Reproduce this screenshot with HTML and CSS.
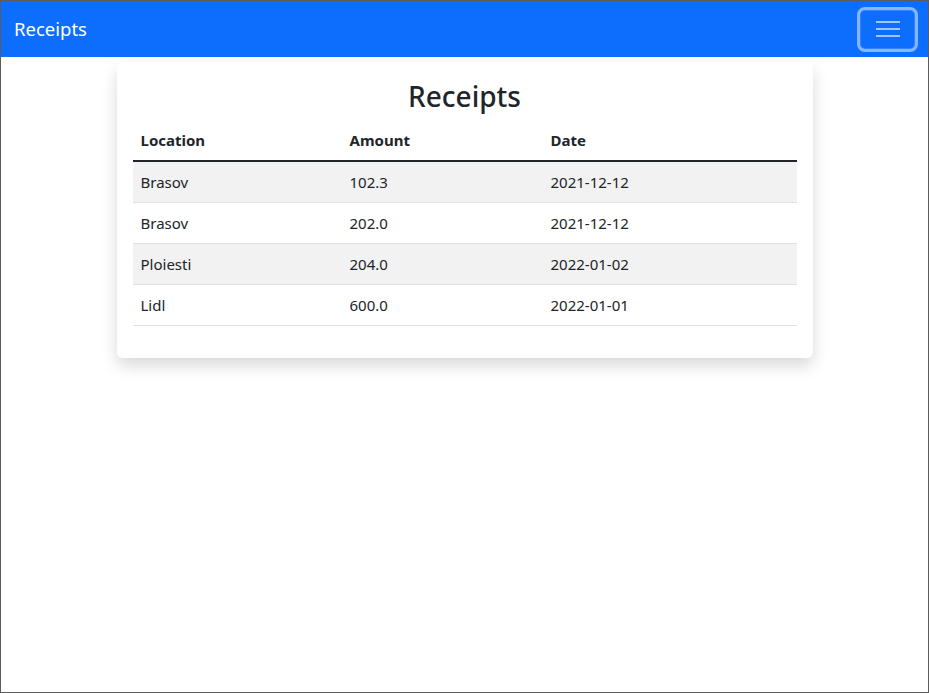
FILE: index.html
```html
<!DOCTYPE html>
<html lang="en">
<head>
<meta charset="utf-8">
<title>Receipts</title>
<link rel="stylesheet" href="styles.css">
</head>
<body>
<div class="window">
  <nav class="navbar">
    <span class="brand">Receipts</span>
    <button class="toggler" type="button" aria-label="Toggle navigation">
      <svg width="24" height="18" viewBox="0 0 24 18"><path d="M0 2h24M0 9h24M0 16h24" stroke="rgba(255,255,255,0.6)" stroke-width="2"/></svg>
    </button>
  </nav>
  <main class="container">
    <section class="card">
      <h2 class="title">Receipts</h2>
      <table class="table">
        <thead>
          <tr><th class="c1">Location</th><th class="c2">Amount</th><th class="c3">Date</th></tr>
        </thead>
        <tbody>
          <tr class="odd"><td>Brasov</td><td>102.3</td><td>2021-12-12</td></tr>
          <tr><td>Brasov</td><td>202.0</td><td>2021-12-12</td></tr>
          <tr class="odd"><td>Ploiesti</td><td>204.0</td><td>2022-01-02</td></tr>
          <tr><td>Lidl</td><td>600.0</td><td>2022-01-01</td></tr>
        </tbody>
      </table>
    </section>
  </main>
</div>
</body>
</html>
```
FILE: styles.css
```css
* { box-sizing: border-box; }
html, body { margin: 0; padding: 0; }
body {
  font-family: "Noto Sans", "Open Sans", sans-serif;
  color: #212529;
  background: #fff;
}
.window {
  height: 100vh;
  border: 1px solid #5c5c5c;
  display: flex;
  flex-direction: column;
}
.navbar {
  height: 56px;
  background: #0d6efd;
  display: flex;
  align-items: center;
  justify-content: space-between;
  padding: 0 10px 0 13px;
}
.brand {
  color: #fff;
  font-size: 18.5px;
  line-height: 1;
}
.toggler {
  width: 61px;
  height: 45px;
  border: 3px solid rgba(255,255,255,0.5);
  border-radius: 8px;
  background: transparent;
  display: flex;
  align-items: center;
  justify-content: center;
  padding: 0;
  box-shadow: inset 0 0 0 1px rgba(255,255,255,0.15);
}
.container {
  width: 720px;
  margin: 0 auto;
  padding: 5px 12px 0;
}
.card {
  background: #fff;
  border-radius: 6px;
  box-shadow: 0 8px 16px rgba(0,0,0,0.15);
  padding: 16px;
}
.title {
  margin: 0 0 6px;
  text-align: center;
  font-weight: 500;
  font-size: 28px;
  line-height: 36px;
}
.table {
  width: 100%;
  border-collapse: collapse;
  margin-bottom: 16px;
  font-size: 15px;
}
.table th, .table td {
  text-align: left;
  padding: 8px;
  line-height: 24px;
  border-bottom: 1px solid #dee2e6;
}
.table th {
  font-weight: 700;
  border-bottom: 2px solid #212529;
}
.c1 { width: 209px; }
.c2 { width: 201px; }
.c3 { width: 254px; }
.odd td { background: #f2f2f2; }
```
